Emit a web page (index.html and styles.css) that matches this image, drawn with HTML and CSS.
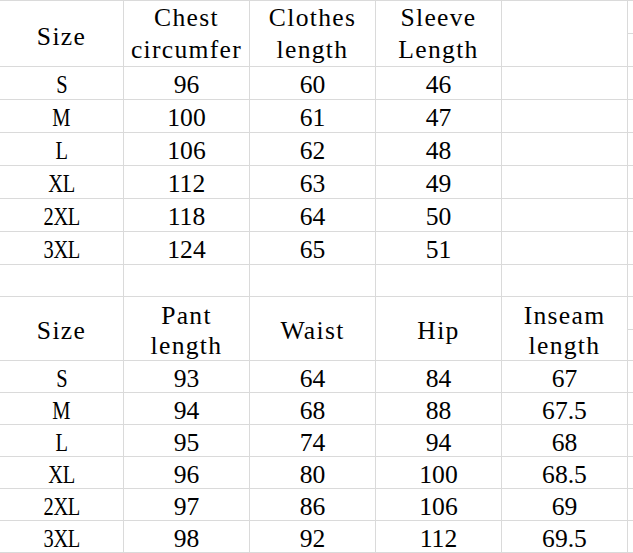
FILE: index.html
```html
<!DOCTYPE html>
<html>
<head>
<meta charset="utf-8">
<link rel="stylesheet" href="styles.css">
</head>
<body>
<div class="sheet">
  <div class="c h one"><span class="t">Size</span></div>
  <div class="c h"><span class="t">Chest<br>circumfer</span></div>
  <div class="c h"><span class="t">Clothes<br>length</span></div>
  <div class="c h"><span class="t">Sleeve<br>Length</span></div>
  <div class="c h"></div>
  <div class="c"></div>
  <div class="c"></div>

  <div class="c"><span class="sz">S</span></div><div class="c"><span class="n">96</span></div><div class="c"><span class="n">60</span></div><div class="c"><span class="n">46</span></div><div class="c"></div><div class="c"></div>
  <div class="c"><span class="sz">M</span></div><div class="c"><span class="n">100</span></div><div class="c"><span class="n">61</span></div><div class="c"><span class="n">47</span></div><div class="c"></div><div class="c"></div>
  <div class="c"><span class="sz">L</span></div><div class="c"><span class="n">106</span></div><div class="c"><span class="n">62</span></div><div class="c"><span class="n">48</span></div><div class="c"></div><div class="c"></div>
  <div class="c"><span class="sz">XL</span></div><div class="c"><span class="n">112</span></div><div class="c"><span class="n">63</span></div><div class="c"><span class="n">49</span></div><div class="c"></div><div class="c"></div>
  <div class="c"><span class="sz">2XL</span></div><div class="c"><span class="n">118</span></div><div class="c"><span class="n">64</span></div><div class="c"><span class="n">50</span></div><div class="c"></div><div class="c"></div>
  <div class="c"><span class="sz">3XL</span></div><div class="c"><span class="n">124</span></div><div class="c"><span class="n">65</span></div><div class="c"><span class="n">51</span></div><div class="c"></div><div class="c"></div>

  <div class="c"></div><div class="c"></div><div class="c"></div><div class="c"></div><div class="c"></div><div class="c"></div>

  <div class="c h h2"><span class="t">Size</span></div>
  <div class="c h h2"><span class="t">Pant<br>length</span></div>
  <div class="c h h2"><span class="t">Waist</span></div>
  <div class="c h h2"><span class="t">Hip</span></div>
  <div class="c h h2"><span class="t">Inseam<br>length</span></div>
  <div class="c"></div>
  <div class="c"></div>

  <div class="c"><span class="sz">S</span></div><div class="c"><span class="n">93</span></div><div class="c"><span class="n">64</span></div><div class="c"><span class="n">84</span></div><div class="c"><span class="n">67</span></div><div class="c"></div>
  <div class="c"><span class="sz">M</span></div><div class="c"><span class="n">94</span></div><div class="c"><span class="n">68</span></div><div class="c"><span class="n">88</span></div><div class="c"><span class="n">67.5</span></div><div class="c"></div>
  <div class="c"><span class="sz">L</span></div><div class="c"><span class="n">95</span></div><div class="c"><span class="n">74</span></div><div class="c"><span class="n">94</span></div><div class="c"><span class="n">68</span></div><div class="c"></div>
  <div class="c"><span class="sz">XL</span></div><div class="c"><span class="n">96</span></div><div class="c"><span class="n">80</span></div><div class="c"><span class="n">100</span></div><div class="c"><span class="n">68.5</span></div><div class="c"></div>
  <div class="c"><span class="sz">2XL</span></div><div class="c"><span class="n">97</span></div><div class="c"><span class="n">86</span></div><div class="c"><span class="n">106</span></div><div class="c"><span class="n">69</span></div><div class="c"></div>
  <div class="c"><span class="sz">3XL</span></div><div class="c"><span class="n">98</span></div><div class="c"><span class="n">92</span></div><div class="c"><span class="n">112</span></div><div class="c"><span class="n">69.5</span></div><div class="c"></div>
</div>
</body>
</html>
```

FILE: styles.css
```css
html, body {
  margin: 0;
  padding: 0;
  background: #ffffff;
  overflow: hidden;
}

.sheet {
  display: grid;
  grid-template-columns: 123px 125px 125px 125px 125px 40px;
  grid-template-rows: 32px 32px repeat(6, 32px) 31px 32px 30px repeat(6, 31px);
  gap: 1px;
  padding: 1px 0;
  width: 668px;
  background: #dadada;
  font-family: "Liberation Serif", serif;
  font-size: 25.6px;
  color: #000000;
}

.c {
  background: #ffffff;
  display: flex;
  align-items: center;
  justify-content: center;
  text-align: center;
  padding-top: 3.5px;
  box-sizing: border-box;
  overflow: hidden;
}

.h {
  grid-row: span 2;
  padding-top: 1px;
}

.h.one {
  padding-top: 6px;
}

.h2 {
  padding-top: 4px;
}

.t {
  line-height: 32px;
  letter-spacing: 1.3px;
  white-space: nowrap;
}

.h2 .t {
  line-height: 30px;
}

.sz {
  display: inline-block;
  line-height: 27px;
  letter-spacing: -0.5px;
  transform: scaleX(0.8);
  white-space: nowrap;
}

.n {
  line-height: 27px;
  white-space: nowrap;
}
```
